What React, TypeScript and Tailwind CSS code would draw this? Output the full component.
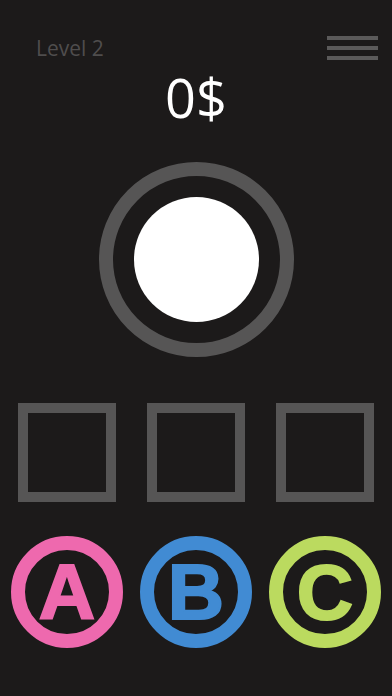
import React from 'react';

const choices = [
  { key: 'A', ring: 'border-[#ee69ae]', text: 'text-[#ee69ae]' },
  { key: 'B', ring: 'border-[#418bd3]', text: 'text-[#418bd3]' },
  { key: 'C', ring: 'border-[#bbda5f]', text: 'text-[#bbda5f]' },
];

export default function App() {
  return (
    <div className="w-full h-[696px] bg-[#1c1a1a] flex flex-col overflow-hidden font-['Open_Sans',sans-serif]">
      {/* top bar */}
      <div className="mt-[36px] h-[24px] flex items-center justify-between pl-[36px] pr-[14px]">
        <span className="text-[21px] leading-[24px] text-[#4f4d4d]">Level 2</span>
        <button className="w-[51px] flex flex-col gap-[6px]">
          <span className="block h-[4px] bg-[#5b5a5a]" />
          <span className="block h-[4px] bg-[#5b5a5a]" />
          <span className="block h-[4px] bg-[#5b5a5a]" />
        </button>
      </div>

      {/* money */}
      <div className="mt-[10px] text-center text-white text-[54px] leading-[54px]">0$</div>

      {/* main button */}
      <div className="mt-[38px] flex justify-center">
        <div className="w-[195px] h-[195px] rounded-full border-[14px] border-[#565555] flex items-center justify-center">
          <div className="w-[125px] h-[125px] rounded-full bg-white" />
        </div>
      </div>

      {/* slots */}
      <div className="mt-[46px] flex pl-[18px] gap-[31px]">
        {[0, 1, 2].map((i) => (
          <div key={i} className="w-[98px] h-[99px] border-[10px] border-[#565555]" />
        ))}
      </div>

      {/* answers */}
      <div className="mt-[34px] flex pl-[11px] gap-[17px]">
        {choices.map((c) => (
          <div
            key={c.key}
            className={`w-[112px] h-[112px] rounded-full border-[14px] ${c.ring} flex items-center justify-center`}
          >
            <span
              className={`font-['Liberation_Sans',Arial,sans-serif] font-bold text-[78px] leading-none [-webkit-text-stroke:2px_currentColor] ${c.text}`}
            >
              {c.key}
            </span>
          </div>
        ))}
      </div>
    </div>
  );
}
